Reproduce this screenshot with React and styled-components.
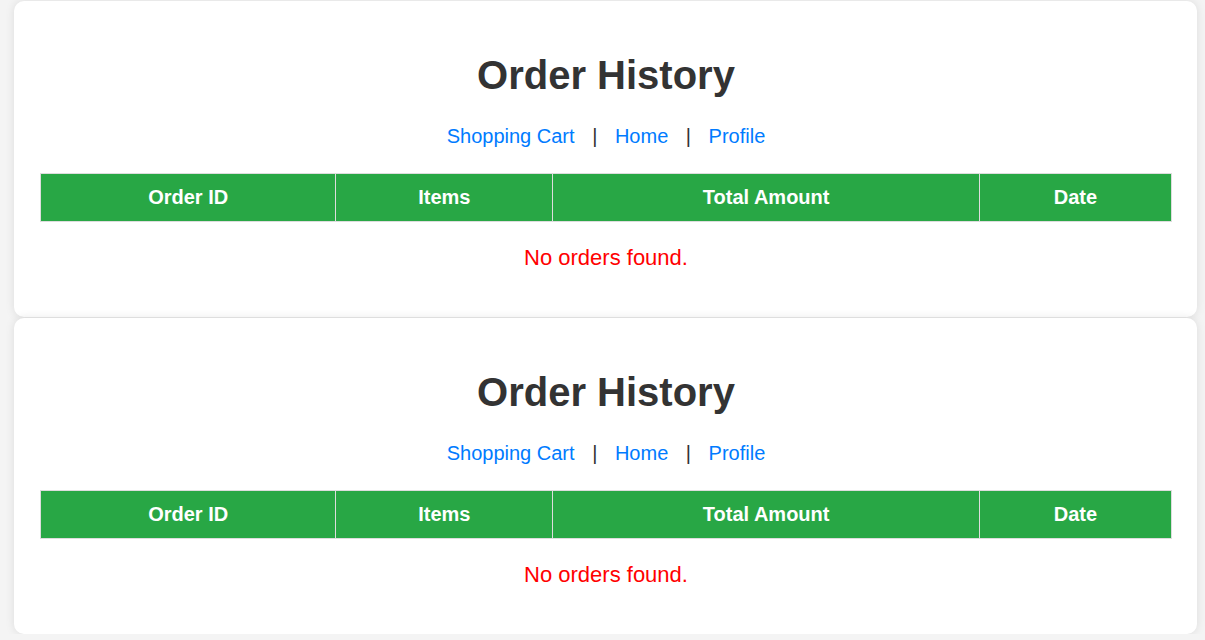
import React from "react";
import styled, { createGlobalStyle } from "styled-components";

const GlobalStyle = createGlobalStyle`
  html, body {
    margin: 0;
    padding: 0;
    background: #f4f4f4;
    font-family: "Liberation Sans", Arial, sans-serif;
  }
`;

const Page = styled.div`
  display: flex;
  flex-direction: column;
  gap: 1px;
  padding: 1px 8px 0 14px;
`;

const Card = styled.section`
  background: #fff;
  border-radius: 10px;
  box-shadow: 0 0 10px rgba(0, 0, 0, 0.1);
  padding: 20px 25px 20px 26px;
  text-align: center;
`;

const Title = styled.h1`
  margin: 32px 0 0;
  font-size: 40px;
  font-weight: bold;
  color: #333;
  line-height: normal;
`;

const Nav = styled.nav`
  margin: 27px 0 25px;
  font-size: 20px;
  color: #333;
  line-height: normal;
`;

const NavLink = styled.a`
  color: #007bff;
  text-decoration: none;
  margin: 0 12px;
  cursor: pointer;
`;

const Table = styled.table`
  width: 100%;
  border-collapse: collapse;
`;

const Th = styled.th`
  background: #28a745;
  color: #fff;
  font-size: 20px;
  font-weight: bold;
  padding: 12px;
  border: 1px solid #ddd;
  line-height: normal;
`;

const Empty = styled.p`
  margin: 23px 0 26px;
  font-size: 22px;
  color: red;
  line-height: normal;
`;

const columns = ["Order ID", "Items", "Total Amount", "Date"];
const links = ["Shopping Cart", "Home", "Profile"];

function OrderHistory() {
  return (
    <Card>
      <Title>Order History</Title>
      <Nav>
        {links.map((l, i) => (
          <React.Fragment key={l}>
            {i > 0 && " | "}
            <NavLink>{l}</NavLink>
          </React.Fragment>
        ))}
      </Nav>
      <Table>
        <thead>
          <tr>
            {columns.map((c) => (
              <Th key={c}>{c}</Th>
            ))}
          </tr>
        </thead>
      </Table>
      <Empty>No orders found.</Empty>
    </Card>
  );
}

export default function App() {
  return (
    <>
      <GlobalStyle />
      <Page>
        <OrderHistory />
        <OrderHistory />
      </Page>
    </>
  );
}
